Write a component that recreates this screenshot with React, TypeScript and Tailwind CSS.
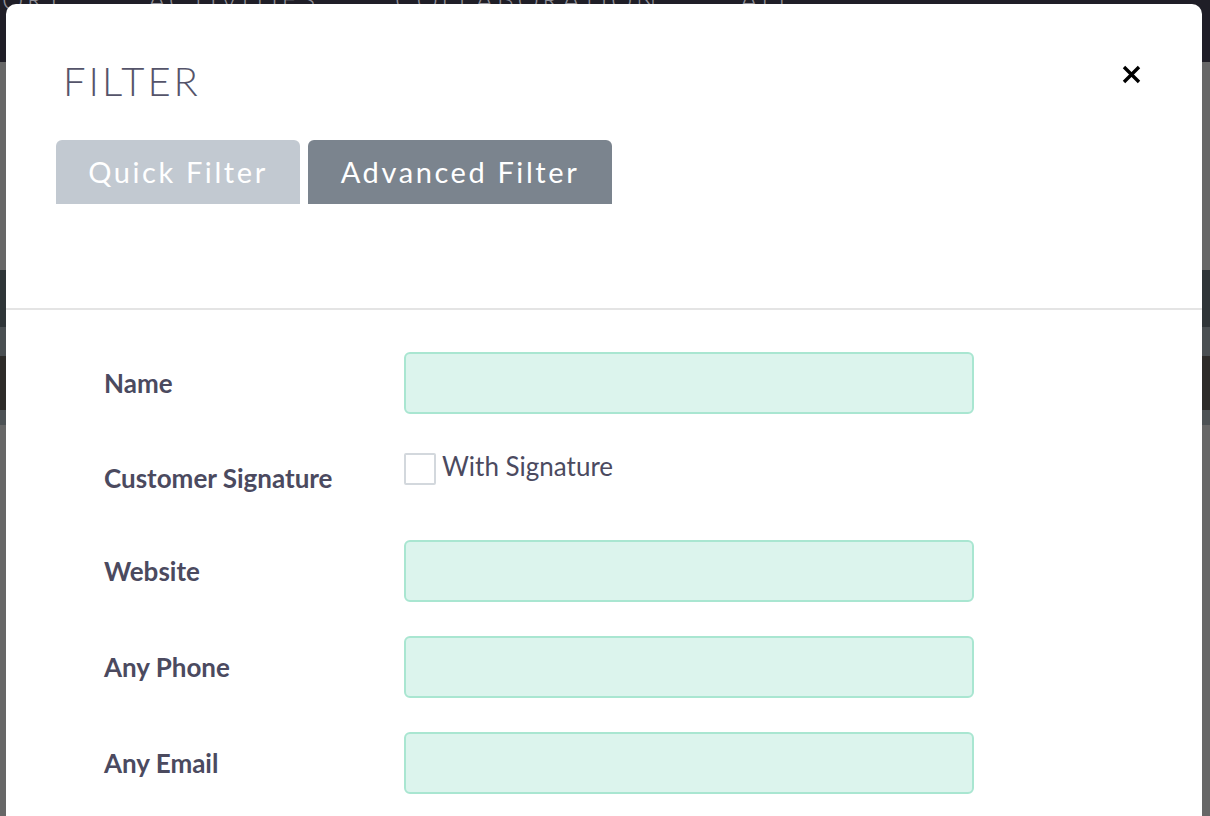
import React from "react";

function Field({ label }: { label: string }) {
  return (
    <div className="flex items-center h-[62px]">
      <div className="w-[300px] text-[26px] font-bold text-[#4b4a5f] leading-none">{label}</div>
      <div className="w-[570px] h-[62px] rounded-[6px] bg-[#dcf4ed] border-2 border-[#a9e6d1]" />
    </div>
  );
}

export default function App() {
  return (
    <div className="relative w-[1210px] h-[816px] overflow-hidden bg-[#676767] font-['Lato',sans-serif]">
      {/* background page */}
      <div className="flex flex-col">
        <div className="h-[62px] bg-[#1f1e27] relative overflow-hidden">
          <div className="absolute top-[-20px] left-0 flex text-[27px] tracking-[3.5px] text-[#8f8e96] font-light whitespace-nowrap">
            <span className="w-[148px] pl-[2px]">ORT</span>
            <span className="w-[247px]">ACTIVITIES</span>
            <span className="w-[345px]">COLLABORATION</span>
            <span>ALL</span>
          </div>
        </div>
        <div className="h-[208px] bg-[#676767]" />
        <div className="h-[57px] bg-[#2f3538]" />
        <div className="h-[29px] bg-[#4a4f52]" />
        <div className="h-[54px] bg-[#2d2b29]" />
        <div className="h-[15px] bg-[#4d5255]" />
        <div className="flex-1 bg-[#666666]" />
      </div>

      {/* modal */}
      <div className="absolute left-[6px] top-[4px] w-[1196px] h-[900px] bg-white rounded-[10px]">
        <div className="relative pl-[50px] pt-[57px] pb-[104px] border-b-2 border-[#e4e4e4]">
          <div className="ml-[7px] text-[40px] leading-none font-light tracking-[3px] text-[#55546a]">FILTER</div>
          <button className="absolute right-[61px] top-[61px] w-[19px] h-[19px]">
            <svg viewBox="0 0 19 19" width="19" height="19">
              <path d="M2 2 L17 17 M17 2 L2 17" stroke="#000" strokeWidth="3.4" strokeLinecap="butt" />
            </svg>
          </button>
          <div className="flex gap-[8px] mt-[39px]">
            <div className="w-[244px] h-[64px] rounded-t-[6px] bg-[#c2c9d1] flex items-center justify-center text-[29px] tracking-[2.6px] text-white">
              Quick Filter
            </div>
            <div className="w-[304px] h-[64px] rounded-t-[6px] bg-[#7b848e] flex items-center justify-center text-[29px] tracking-[2.6px] text-white">
              Advanced Filter
            </div>
          </div>
        </div>

        <div className="pl-[98px] pt-[42px] flex flex-col gap-[34px]">
          <Field label="Name" />
          <div className="flex h-[58px]">
            <div className="w-[300px] pt-[15px] text-[26px] font-bold text-[#4b4a5f] leading-[30px]">Customer Signature</div>
            <label className="flex items-start pt-[5px] gap-[6px]">
              <span className="w-[32px] h-[32px] border-2 border-[#d3d8dd] rounded-[2px] bg-white" />
              <span className="text-[26px] text-[#4b4a5f] leading-[26px]">With Signature</span>
            </label>
          </div>
          <Field label="Website" />
          <Field label="Any Phone" />
          <Field label="Any Email" />
        </div>
      </div>
    </div>
  );
}
